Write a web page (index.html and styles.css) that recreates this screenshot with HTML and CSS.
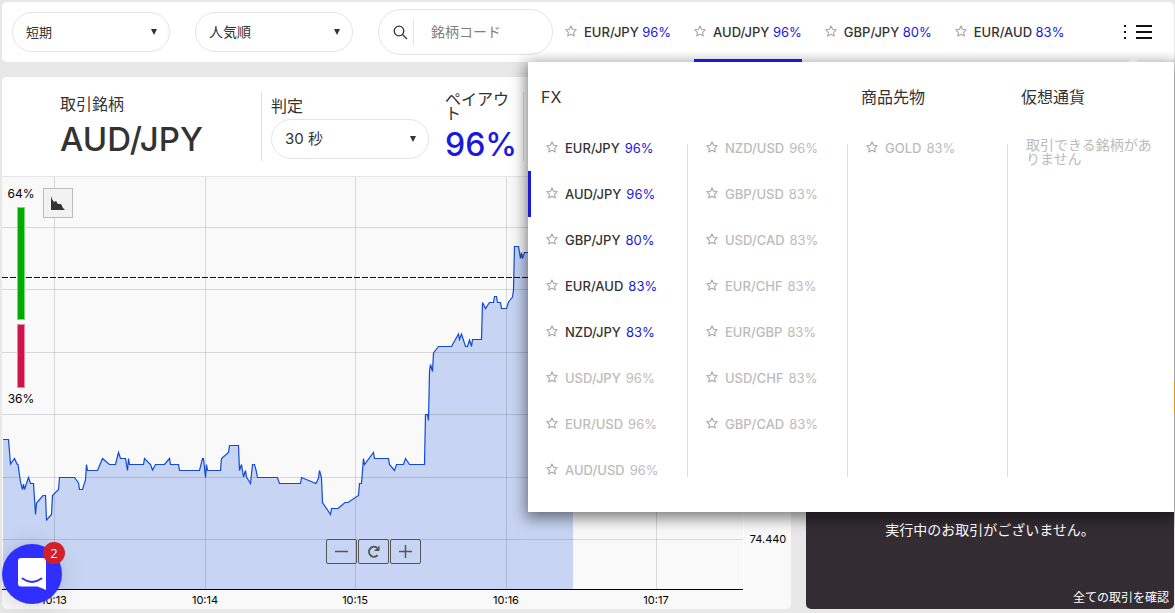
FILE: index.html
```html
<!DOCTYPE html>
<html lang="ja">
<head>
<meta charset="utf-8">
<title>AUD/JPY</title>
<link rel="stylesheet" href="styles.css">
</head>
<body>
<svg class="defs" width="0" height="0" aria-hidden="true">
  <symbol id="star" viewBox="0 0 12 12"><path d="M6 .9 7.6 4.2 11.3 4.7 8.6 7.3 9.3 11 6 9.3 2.7 11 3.4 7.3 .7 4.7 4.4 4.2Z" fill="none" stroke="#a6a6a6" stroke-width="1.1" stroke-linejoin="round"/></symbol>
</svg>
<div class="app">
  <header class="topbar">
    <div class="pick"><select aria-label="期間"><option>短期</option></select></div>
    <div class="pick"><select aria-label="並び順"><option>人気順</option></select></div>
    <label class="search">
      <svg width="15" height="15" viewBox="0 0 15 15" fill="none" stroke="#333" stroke-width="1.3"><circle cx="6" cy="6" r="4.8"/><path d="M9.5 9.5 14 14"/></svg>
      <input type="text" placeholder="銘柄コード" aria-label="銘柄コード">
    </label>
    <nav class="tabs">
      <a href="#"><svg class="star"><use href="#star"/></svg><span>EUR/JPY <b>96%</b></span></a>
      <a href="#" class="current"><svg class="star"><use href="#star"/></svg><span>AUD/JPY <b>96%</b></span></a>
      <a href="#"><svg class="star"><use href="#star"/></svg><span>GBP/JPY <b>80%</b></span></a>
      <a href="#"><svg class="star"><use href="#star"/></svg><span>EUR/AUD <b>83%</b></span></a>
    </nav>
    <button class="burger" aria-label="メニュー"><svg width="29" height="14" viewBox="0 0 29 14" fill="#111"><path d="M1 0h2v2H1zM1 6h2v2H1zM1 12h2v2H1zM13 0h16v2H13zM13 6h16v2H13zM13 12h16v2H13z"/></svg></button>
    <div class="menu">
      <section>
        <h2>FX</h2>
        <div class="cols">
          <ul>
            <li><svg class="star"><use href="#star"/></svg><a href="#">EUR/JPY</a><b>96%</b></li>
            <li class="active"><svg class="star"><use href="#star"/></svg><a href="#">AUD/JPY</a><b>96%</b></li>
            <li><svg class="star"><use href="#star"/></svg><a href="#">GBP/JPY</a><b>80%</b></li>
            <li><svg class="star"><use href="#star"/></svg><a href="#">EUR/AUD</a><b>83%</b></li>
            <li><svg class="star"><use href="#star"/></svg><a href="#">NZD/JPY</a><b>83%</b></li>
            <li class="off"><svg class="star"><use href="#star"/></svg><a href="#">USD/JPY</a><b>96%</b></li>
            <li class="off"><svg class="star"><use href="#star"/></svg><a href="#">EUR/USD</a><b>96%</b></li>
            <li class="off"><svg class="star"><use href="#star"/></svg><a href="#">AUD/USD</a><b>96%</b></li>
          </ul>
          <i class="rule"></i>
          <ul>
            <li class="off"><svg class="star"><use href="#star"/></svg><a href="#">NZD/USD</a><b>96%</b></li>
            <li class="off"><svg class="star"><use href="#star"/></svg><a href="#">GBP/USD</a><b>83%</b></li>
            <li class="off"><svg class="star"><use href="#star"/></svg><a href="#">USD/CAD</a><b>83%</b></li>
            <li class="off"><svg class="star"><use href="#star"/></svg><a href="#">EUR/CHF</a><b>83%</b></li>
            <li class="off"><svg class="star"><use href="#star"/></svg><a href="#">EUR/GBP</a><b>83%</b></li>
            <li class="off"><svg class="star"><use href="#star"/></svg><a href="#">USD/CHF</a><b>83%</b></li>
            <li class="off"><svg class="star"><use href="#star"/></svg><a href="#">GBP/CAD</a><b>83%</b></li>
          </ul>
          <i class="rule"></i>
        </div>
      </section>
      <section>
        <h2>商品先物</h2>
        <div class="cols">
          <ul><li class="off"><svg class="star"><use href="#star"/></svg><a href="#">GOLD</a><b>83%</b></li></ul>
          <i class="rule"></i>
        </div>
      </section>
      <section>
        <h2>仮想通貨</h2>
        <p class="none">取引できる銘柄がありません</p>
      </section>
    </div>
  </header>

  <main>
    <section class="trade">
      <div class="info">
        <div class="symbol"><span>取引銘柄</span><h1>AUD/JPY</h1></div>
        <div class="expiry"><label for="exp">判定</label><div class="pick"><select id="exp"><option>30 秒</option></select></div></div>
        <div class="payout"><span>ペイアウト</span><strong>96%</strong></div>
      </div>
      <div class="chart">
        <svg class="plot" viewBox="2 177 789 432">
          <polygon fill="#c7d4f3" points="3,589 3,439.5 8.5,439.5 10.5,464 14.5,458.5 17,464 18,464.5 20.5,482 22.5,489.5 23.5,484 24.5,489.5 28.5,477.5 30.5,483.5 33.5,483.5 35.5,514.5 36.5,503 43,495.5 45.5,495.5 46.5,520 51.5,514.5 52.5,495.5 58.5,489.5 59.5,477.5 74.5,477.5 78.5,483 79.5,489.5 82.5,489.5 85.5,480 86.5,464.5 87.5,470.5 97.5,470.5 102.5,458.5 109.5,464.5 115.5,464.5 118.5,452.5 120.5,458.5 125.5,458.5 127.5,470.5 128.5,458.5 129.5,464.5 143.5,464.5 144.5,458.5 150.5,464.5 152.5,470 155.5,464.5 164.5,464.5 169.5,458.5 170.5,464.5 178.5,464.5 179.5,470.5 199.5,470.5 202.5,458.5 203.5,458.5 205.5,477.5 206.5,464.5 207.5,470.5 220.5,470.5 221.5,458.5 228.5,452.5 229.5,445.5 238.5,445.5 239.5,470.5 241.5,464.5 243.5,477 245.5,470.5 246.5,477 250.5,483.5 252.5,464.5 254.5,464.5 256,470 257.5,477.5 277.5,477.5 279.5,483.5 300.5,483.5 301.5,477.5 316,483.5 318.5,478 319.5,470.5 321.5,478 322.5,502.5 330.5,514.5 331.5,508.5 338,508.5 345,502.5 348,502.5 358.5,495.5 359.5,483.5 361.5,483.5 363.5,458.5 364.5,464.5 373.5,452.5 374.5,458.5 388.5,458.5 389.5,464.5 394.5,470.5 396.5,464.5 403.5,464.5 405.5,458.5 409.5,464.5 424.5,464.5 425.5,414.5 427.5,414.5 428.5,420.5 429.5,371 430.5,364.5 432.5,371.5 433.5,353 438.5,346.5 451.5,346.5 458.5,334 459.5,339.5 461.5,334 465.5,346.5 467.5,346.5 469.5,340 471.5,346.5 472.5,339.5 481.5,339.5 482.5,302.5 485.5,308.5 489.5,302.5 493.5,302.5 494.5,296.5 496.5,296.5 497.5,302.5 500.5,302.5 501.5,308.5 506.5,308.5 508.5,302 512.5,297 513.5,290 514.5,246.5 518.5,246.5 520.5,258.5 521.5,252.5 522.5,258.5 524.5,252.5 573,252.5 573,589"/>
          <path class="grid" d="M2 227.5H743M2 289.5H743M2 352.5H743M2 414.5H743M2 477.5H743M2 539.5H743M54.5 177V589M205.5 177V589M355.5 177V589M506.5 177V589M656.5 177V589"/>
          <path d="M743.5 177V589" stroke="#fff"/>
          <polyline fill="none" stroke="#1149d6" stroke-width="1.2" points="3,439.5 8.5,439.5 10.5,464 14.5,458.5 17,464 18,464.5 20.5,482 22.5,489.5 23.5,484 24.5,489.5 28.5,477.5 30.5,483.5 33.5,483.5 35.5,514.5 36.5,503 43,495.5 45.5,495.5 46.5,520 51.5,514.5 52.5,495.5 58.5,489.5 59.5,477.5 74.5,477.5 78.5,483 79.5,489.5 82.5,489.5 85.5,480 86.5,464.5 87.5,470.5 97.5,470.5 102.5,458.5 109.5,464.5 115.5,464.5 118.5,452.5 120.5,458.5 125.5,458.5 127.5,470.5 128.5,458.5 129.5,464.5 143.5,464.5 144.5,458.5 150.5,464.5 152.5,470 155.5,464.5 164.5,464.5 169.5,458.5 170.5,464.5 178.5,464.5 179.5,470.5 199.5,470.5 202.5,458.5 203.5,458.5 205.5,477.5 206.5,464.5 207.5,470.5 220.5,470.5 221.5,458.5 228.5,452.5 229.5,445.5 238.5,445.5 239.5,470.5 241.5,464.5 243.5,477 245.5,470.5 246.5,477 250.5,483.5 252.5,464.5 254.5,464.5 256,470 257.5,477.5 277.5,477.5 279.5,483.5 300.5,483.5 301.5,477.5 316,483.5 318.5,478 319.5,470.5 321.5,478 322.5,502.5 330.5,514.5 331.5,508.5 338,508.5 345,502.5 348,502.5 358.5,495.5 359.5,483.5 361.5,483.5 363.5,458.5 364.5,464.5 373.5,452.5 374.5,458.5 388.5,458.5 389.5,464.5 394.5,470.5 396.5,464.5 403.5,464.5 405.5,458.5 409.5,464.5 424.5,464.5 425.5,414.5 427.5,414.5 428.5,420.5 429.5,371 430.5,364.5 432.5,371.5 433.5,353 438.5,346.5 451.5,346.5 458.5,334 459.5,339.5 461.5,334 465.5,346.5 467.5,346.5 469.5,340 471.5,346.5 472.5,339.5 481.5,339.5 482.5,302.5 485.5,308.5 489.5,302.5 493.5,302.5 494.5,296.5 496.5,296.5 497.5,302.5 500.5,302.5 501.5,308.5 506.5,308.5 508.5,302 512.5,297 513.5,290 514.5,246.5 518.5,246.5 520.5,258.5 521.5,252.5 522.5,258.5 524.5,252.5 573,252.5"/>
          <path d="M2 277.5H743" stroke="#111" stroke-dasharray="6 2"/>
          <path d="M2 589.5H743" stroke="#000"/>
          <rect x="17" y="207" width="8" height="113" fill="#7fd67f"/><rect x="18" y="208" width="6" height="111" fill="#0a0"/>
          <rect x="17" y="324" width="8" height="64" fill="#e88aa6"/><rect x="18" y="325" width="6" height="62" fill="#d0124c"/>
          <g class="ticks">
            <text x="21" y="198" class="share">64%</text><text x="21" y="403" class="share">36%</text>
            <text x="54" y="604">10:13</text><text x="205" y="604">10:14</text><text x="355" y="604">10:15</text><text x="506" y="604">10:16</text><text x="656" y="604">10:17</text>
            <text x="768" y="543">74.440</text>
          </g>
        </svg>
        <button class="kind" aria-label="チャート種類"><svg width="14" height="14" viewBox="0 0 14 14"><path d="M0 0 1 3 3 6 5 5 7 8 10 8 12 12 14 14H0Z" fill="#333"/></svg></button>
        <div class="zoom">
          <button aria-label="縮小"><svg width="13" height="13" viewBox="0 0 13 13"><path d="M0 6.500H13"/></svg></button>
          <button aria-label="リセット"><svg width="13" height="13" viewBox="0 0 13 13"><path d="M10 2.800A5 5 0 1 0 10.600 10.300" stroke-width="2"/><path d="M12.500 .5V6H7Z" fill="#555" stroke="none"/></svg></button>
          <button aria-label="拡大"><svg width="13" height="13" viewBox="0 0 13 13"><path d="M0 6.500H13M6.500 0V13"/></svg></button>
        </div>
      </div>
    </section>
    <aside class="orders">
      <i class="handle"></i>
      <p>実行中のお取引がございません。</p>
      <a href="#">全ての取引を確認</a>
    </aside>
  </main>
</div>
<button class="chat" aria-label="チャット">
  <svg width="28" height="32" viewBox="0 0 28 32"><path d="M3 0H25Q28 0 28 3V32Q22 29 19 28.500H3Q0 28.500 0 25.500V3Q0 0 3 0Z" fill="#fff"/><path d="M4.500 20.500Q14 27.500 23.500 20.500" fill="none" stroke="#2f2fff" stroke-width="1.800" stroke-linecap="round"/></svg>
  <span>2</span>
</button>
</body>
</html>
```
FILE: styles.css
```css
* { box-sizing: border-box; }
body {
  margin: 0;
  background: #e8e8e8;
  color: #333;
  font: 13px/16px Inter, "Noto Sans CJK JP", sans-serif;
}
a { color: inherit; text-decoration: none; }
button { padding: 0; border: 0; background: none; }
b { color: #1b18de; font-weight: 400; }
.defs { position: absolute; }
.app {
  display: flex;
  flex-direction: column;
  gap: 15px;
  min-height: 100vh;
  padding: 2px 1px 4px 2px;
}
.star { flex: none; width: 12px; height: 12px; margin-bottom: 2px; }

/* top bar */
.topbar {
  position: relative;
  z-index: 2;
  display: flex;
  align-items: center;
  height: 60px;
  padding-left: 10px;
  border-radius: 5px;
  background: #fff;
}
.pick { position: relative; flex: none; width: 158px; }
.pick::after {
  content: "";
  position: absolute;
  top: 17px;
  right: 13px;
  border: 3px solid transparent;
  border-top: 6px solid #333;
  border-bottom: 0;
}
.pick select {
  display: block;
  appearance: none;
  width: 100%;
  height: 40px;
  padding: 0 13px;
  border: 1px solid #e4e4e4;
  border-radius: 20px;
  background: #fff;
  color: #333;
  font: inherit;
}
.topbar > .pick { margin-right: 25px; }
.topbar > .pick + .pick select { font-size: 14px; }
.search {
  flex: none;
  display: flex;
  align-items: center;
  width: 175px;
  height: 46px;
  padding-left: 14px;
  border: 1px solid #e4e4e4;
  border-radius: 23px;
}
.search input {
  width: 120px;
  height: 27px;
  margin-left: 5px;
  padding: 0 0 2px 17px;
  border: 0;
  border-left: 1px solid #e4e4e4;
  background: none;
  font: 14px/16px "Noto Sans CJK JP", sans-serif;
}
.search input::placeholder { color: #808080; }
.tabs { display: flex; gap: 23px; height: 60px; margin-left: 12px; position: relative; z-index: 3; }
.tabs a {
  display: flex;
  align-items: center;
  gap: 7px;
  border-top: 3px solid transparent;
  border-bottom: 3px solid transparent;
  font-weight: 500;
  white-space: nowrap;
}
.tabs .current { border-bottom-color: #1b18de; }
.burger { margin-left: auto; margin-right: 22px; height: 14px; }

/* instrument menu */
.menu {
  position: absolute;
  top: 100%;
  right: 0;
  display: grid;
  grid-template-columns: 320px 160px 1fr;
  width: 646px;
  padding: 27px 0 19px;
  background: #fff;
  box-shadow: 0 4px 14px 2px rgba(0, 0, 0, .5);
  clip-path: inset(-10px -1px -30px -20px);
}
.menu::before {
  content: "";
  position: absolute;
  top: -5px;
  right: 36px;
  border: 5px solid transparent;
  border-top: 0;
  border-bottom-color: #e4e4e4;
}
.menu h2 { margin: 0 0 20px 13px; font-size: 16px; line-height: 16px; font-weight: 400; }
.cols { display: flex; min-height: 368px; }
.menu ul { flex: 1; margin: 0; padding: 0; list-style: none; }
.menu li {
  display: flex;
  align-items: center;
  gap: 7px;
  height: 46px;
  padding-left: 15px;
  border-left: 3px solid transparent;
  font-weight: 500;
}
.menu li b { margin-left: -2px; }
.menu .active { border-color: #1b18de; }
.menu .off, .menu .off b { color: #bbb; }
.rule { width: 1px; margin: 19px 0 16px; background: #ddd; }
.none { width: 130px; margin: 33px 0 0 18px; color: #bbb; font-size: 14px; line-height: 14px; }

/* trade panel */
main { display: flex; flex: 1; gap: 15px; }
.trade { flex: 1; border-radius: 5px; overflow: hidden; background: #f9f9f9; }
.info {
  display: flex;
  height: 100px;
  padding-top: 15px;
  border-bottom: 1px solid #e6e6e6;
  background: #fff;
  font-size: 16px;
}
.info > div { height: 69px; border-right: 1px solid #ddd; }
.symbol { width: 260px; padding: 4px 0 0 58px; }
.symbol h1 { margin: 7px 0 0; font-size: 33px; line-height: 40px; font-weight: 500; }
.expiry { padding: 6px 0 0 9px; }
.info .expiry { border: 0; }
.expiry label { display: block; margin-bottom: 5px; }
.expiry select { font-size: 15px; }
.payout { width: 95px; padding: 0 10px 0 16px; line-height: 14px; }
.payout span { display: block; }
.payout strong { display: block; margin-top: 5px; color: #1b18de; font-size: 32px; line-height: 40px; font-weight: 500; }
.chart { position: relative; }
.plot { display: block; width: 100%; }
.grid { fill: none; stroke: #000; stroke-opacity: .13; }
.ticks { font-size: 11px; fill: #000; text-anchor: middle; }
.share { font-size: 12px; }
.kind {
  position: absolute;
  left: 41px;
  top: 11px;
  display: grid;
  place-items: center;
  width: 30px;
  height: 30px;
  border: 1px solid #bbb;
  background: #f2f2f2;
}
.zoom { position: absolute; left: 324px; bottom: 45px; display: flex; gap: 1px; }
.zoom button {
  display: grid;
  place-items: center;
  width: 31px;
  height: 25px;
  border: 1px solid #555;
  border-radius: 2px;
}
.zoom svg { fill: none; stroke: #555; stroke-width: 1.5; }

/* open orders */
.orders {
  position: relative;
  flex: none;
  display: flex;
  flex-direction: column;
  justify-content: flex-end;
  width: 368px;
  border-radius: 5px;
  background: #332c33;
  color: #fff;
}
.orders p { margin: 0 0 52px; font-size: 14px; text-align: center; }
.orders a { align-self: flex-end; margin: 0 5px 3px; font-size: 12px; }
.handle { position: absolute; z-index: 3; top: 304px; right: -1px; width: 1px; height: 32px; background: #dc961e; }

/* chat launcher */
.chat {
  position: fixed;
  z-index: 4;
  left: 2px;
  bottom: 9px;
  display: grid;
  place-items: center;
  width: 60px;
  height: 60px;
  border-radius: 30px;
  background: #2f2fff;
  box-shadow: 0 2px 24px rgba(0, 0, 0, .15);
}
.chat span {
  position: absolute;
  top: -2px;
  right: -3px;
  width: 22px;
  border-radius: 11px;
  background: #d3202a;
  color: #fff;
  font: 13px/22px "Open Sans", sans-serif;
}
```
